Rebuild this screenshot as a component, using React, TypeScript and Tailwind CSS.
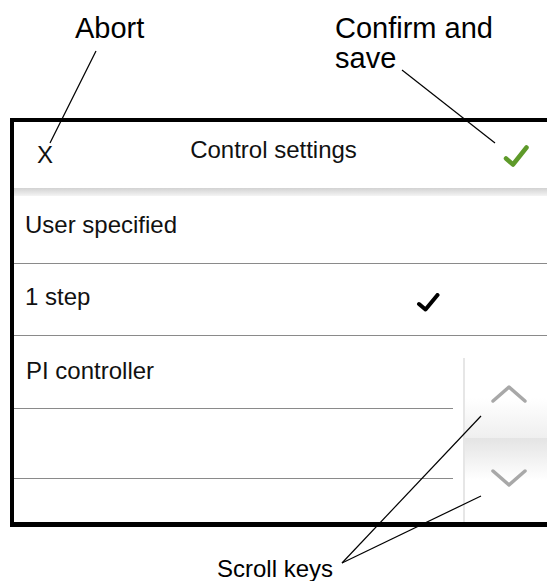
export default function App() {
  const font = { fontFamily: '"Liberation Sans", Arial, sans-serif' };

  return (
    <div className="relative w-[547px] h-[581px] overflow-hidden bg-white text-black" style={font}>
      {/* annotation labels */}
      <div className="flex h-[118px] pt-[13px] pl-[75px] text-[29px] leading-[30px]">
        <div className="w-[260px]">Abort</div>
        <div>
          Confirm and
          <br />
          save
        </div>
      </div>

      {/* device screen */}
      <div className="ml-[10px] h-[409px] border-t-4 border-l-4 border-b-[5px] border-black flex flex-col">
        {/* header */}
        <div className="flex h-[66px] text-[24px] leading-[24px] text-[#111]">
          <div className="w-[80px] pl-[23px] pt-[21px]">X</div>
          <div className="flex-1 text-center pt-[16px]">Control settings</div>
          <div className="w-[94px] flex justify-end pr-[18px] pt-[23px]">
            <svg width="26" height="24" viewBox="0 0 26 24">
              <path d="M3 13.5 L10 19.5 L23.5 2.5" fill="none" stroke="#5e9a2a" strokeWidth="4.5" strokeLinecap="round" strokeLinejoin="round" />
            </svg>
          </div>
        </div>
        <div className="h-[8px] bg-gradient-to-b from-[#d2d2d2] to-[#f4f4f4]" />

        {/* list */}
        <div className="h-[68px] border-b border-[#8a8a8a] pl-[11px] pt-[17px] text-[24px] leading-[24px] text-[#111]">
          User specified
        </div>
        <div className="h-[72px] border-b border-[#8a8a8a] flex items-start text-[24px] leading-[24px] text-[#111]">
          <div className="w-[402px] pl-[11px] pt-[21px]">1 step</div>
          <svg className="mt-[29px]" width="24" height="20" viewBox="0 0 24 20">
            <path d="M3 11 L9.5 16.5 L21.5 2" fill="none" stroke="#000" strokeWidth="4" strokeLinecap="round" strokeLinejoin="round" />
          </svg>
        </div>

        <div className="flex flex-1">
          <div className="w-[439px] flex flex-col">
            <div className="h-[73px] border-b border-[#8a8a8a] pl-[12px] pt-[23px] text-[24px] leading-[24px] text-[#111]">
              PI controller
            </div>
            <div className="h-[70px] border-b border-[#8a8a8a]" />
            <div className="flex-1" />
          </div>

          {/* scroll keys */}
          <div className="ml-[10px] flex-1 mt-[22px] flex flex-col border-l-2 border-[#e6e6e6]">
            <div className="h-[80px] flex items-center justify-center bg-gradient-to-b from-white via-white to-[#efefef]">
              <svg className="ml-[6px] mt-[-8px]" width="36" height="20" viewBox="0 0 36 20">
                <path d="M2 17 L18 3 L34 17" fill="none" stroke="#a8a8a8" strokeWidth="3.5" strokeLinecap="round" strokeLinejoin="round" />
              </svg>
            </div>
            <div className="flex-1 flex items-center justify-center bg-gradient-to-b from-[#e4e4e4] via-white to-white">
              <svg className="ml-[6px] mt-[-4px]" width="36" height="20" viewBox="0 0 36 20">
                <path d="M2 3 L18 17 L34 3" fill="none" stroke="#a8a8a8" strokeWidth="3.5" strokeLinecap="round" strokeLinejoin="round" />
              </svg>
            </div>
          </div>
        </div>
      </div>

      <div className="pt-[30px] pl-[217px] text-[24px] leading-[24px]">Scroll keys</div>

      {/* leader lines */}
      <svg className="absolute inset-0 pointer-events-none" width="547" height="581" viewBox="0 0 547 581">
        <g stroke="#000" strokeWidth="1.2" fill="none">
          <line x1="96" y1="51" x2="50" y2="143" />
          <line x1="402" y1="70" x2="495" y2="143" />
          <line x1="342" y1="563" x2="481" y2="416" />
          <line x1="342" y1="563" x2="481" y2="496" />
        </g>
      </svg>
    </div>
  );
}
